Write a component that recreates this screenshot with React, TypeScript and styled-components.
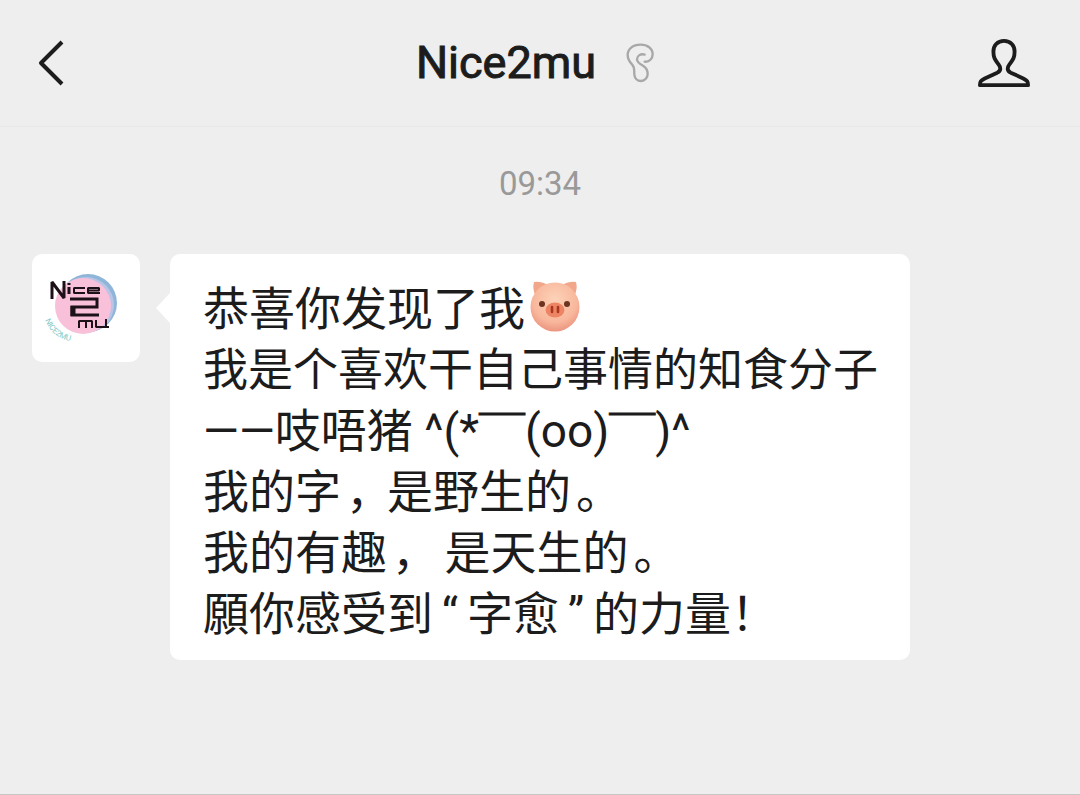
import React from "react";
import styled, { createGlobalStyle } from "styled-components";

const GlobalStyle = createGlobalStyle`
  * { box-sizing: border-box; }
  body {
    margin: 0;
    background: #eeeeee;
    color: #1c1c1c;
    font-family: Roboto, "Noto Sans CJK SC", sans-serif;
  }
`;

const Page = styled.div`
  min-height: 100vh;
  display: flex;
  flex-direction: column;
  background: #eeeeee;
  border-bottom: 1px solid #c6c6c6;
`;

const Header = styled.header`
  display: grid;
  grid-template-columns: 1fr auto 1fr;
  align-items: center;
  height: 127px;
  padding: 0 50px 0 36px;
  border-bottom: 1px solid #e7e7e7;
`;

const IconButton = styled.button<{ $side: "start" | "end" }>`
  display: flex;
  justify-self: ${(p) => p.$side};
  padding: 0;
  border: 0;
  background: none;
  color: #1c1c1c;
  cursor: pointer;
`;

const TitleGroup = styled.div`
  display: flex;
  align-items: center;
  gap: 30px;
  padding-left: 4px;
  color: #a8a8a8;
`;

const Title = styled.h1`
  margin: 0;
  color: #1c1c1c;
  font-size: 45px;
  font-weight: 400;
  line-height: 56px;
  -webkit-text-stroke: 1px currentColor;
`;

const Chat = styled.main`
  display: flex;
  flex-direction: column;
  padding: 37px 32px;
`;

const Time = styled.time`
  align-self: center;
  color: #999999;
  font-size: 33px;
  line-height: 40px;
`;

const Message = styled.article`
  display: flex;
  align-items: flex-start;
  gap: 30px;
  margin-top: 50px;
`;

const Avatar = styled.div`
  display: flex;
  flex: none;
  width: 108px;
  height: 108px;
  border-radius: 10px;
  background: #ffffff;
  overflow: hidden;
`;

const Bubble = styled.div`
  position: relative;
  padding: 25px 32px 15px 33px;
  border-radius: 10px;
  background: #ffffff;

  &::before {
    content: "";
    position: absolute;
    top: 39px;
    left: -14px;
    border-style: solid;
    border-width: 15px 14px 15px 0;
    border-color: transparent #ffffff transparent transparent;
  }
`;

const Line = styled.p<{ $full?: boolean }>`
  display: flex;
  align-items: center;
  margin: 0;
  height: 61px;
  font-size: ${(p) => (p.$full ? 45 : 46)}px;
  line-height: 61px;
  white-space: pre;
`;

const Stop = styled.span`
  width: 46px;
  padding-left: 5px;
  font-feature-settings: "halt";
`;

const Quote = styled.span`
  width: 34px;
  text-align: center;
`;

const Overline = styled.span`
  margin-top: 12px;
  -webkit-text-stroke: 1px currentColor;
`;

const Back = () => (
  <svg width="30" height="48" viewBox="0 0 30 48" fill="none" stroke="currentColor" strokeWidth="4">
    <path d="M26 3 L5 24 L26 45" strokeLinejoin="round" />
  </svg>
);

const Ear = () => (
  <svg width="28" height="40" viewBox="10 10 84 120" fill="none" stroke="currentColor" strokeWidth="7" strokeLinecap="round" strokeLinejoin="round">
    <path d="M66 66 C80 68 90 56 90 44 C90 26 74 15 54 15 C30 15 15 28 15 46 C15 58 20 66 28 74 C37 83 34 91 35 104 C36 116 44 124 55 124 C67 124 75 114 75 102 C75 91 71 85 62 79 C52 73 43 69 43 59 C43 48 54 41 66 45" />
  </svg>
);

const Person = () => (
  <svg width="52" height="52" viewBox="0 0 54 52" fill="none" stroke="currentColor" strokeWidth="4" strokeLinejoin="round">
    <path d="M27 3 C20 3 16 8 16 14 C16 21 18 23 21 27 C24 31 24 34 20 36 L7 42 C3 44 2 45 2 49 H52 C52 45 51 44 47 42 L34 36 C30 34 30 31 33 27 C36 23 38 21 38 14 C38 8 34 3 27 3 Z" />
  </svg>
);

const Logo = () => (
  <svg width="108" height="108" viewBox="0 0 108 108" role="img" aria-label="Nice2mu">
    <circle cx="56" cy="49" r="29" fill="#8fb6d8" />
    <circle cx="54" cy="51" r="28" fill="#b9c4e6" />
    <circle cx="51" cy="52" r="28" fill="#f9c0d9" />
    <g fill="none" stroke="#1d1118" strokeLinejoin="bevel">
      <path strokeWidth="3" d="M20 45 V28 L32 44 V27" />
      <path strokeWidth="3" d="M37 33 V40 M37 29 V31" />
      <path strokeWidth="2" d="M53 34 H42 V39 H53 M56 36.5 H67 V34 H56 V39 H68" />
      <path strokeWidth="3" strokeLinejoin="miter" d="M38 45 H65 V53 H40 V61 H67" />
      <path strokeWidth="5" d="M41 52 V62" />
      <path strokeWidth="2" d="M47 74 V67 H60 V74 M54 67 V74 M64 66 V73 H77 M74 65 V74" />
    </g>
    <path id="logo-arc" d="M13 66 Q22 88 48 88" fill="none" />
    <text fill="#86c9c4" fontFamily="Roboto, sans-serif" fontSize="8">
      <textPath href="#logo-arc">NICE2MU</textPath>
    </text>
  </svg>
);

const PigIcon = styled.svg`
  margin: 0 0 7px 4px;
`;

const Pig = () => (
  <PigIcon width="52" height="52" viewBox="0 0 52 52" role="img" aria-label="猪">
    <defs>
      <radialGradient id="pig-face" cx="50%" cy="35%" r="65%">
        <stop offset="0" stopColor="#fdd3b8" />
        <stop offset="0.7" stopColor="#f8b79c" />
        <stop offset="1" stopColor="#ec9580" />
      </radialGradient>
    </defs>
    <path d="M5 2 Q13 1 20 6 L7 17 Q3 9 5 2 Z M47 2 Q39 1 32 6 L45 17 Q49 9 47 2 Z" fill="#f2a78b" />
    <circle cx="26" cy="27" r="24.5" fill="url(#pig-face)" />
    <circle cx="13" cy="24" r="3" fill="#6d3520" />
    <circle cx="38" cy="24" r="3" fill="#6d3520" />
    <ellipse cx="26" cy="30" rx="9.5" ry="7.5" fill="#ed8565" />
    <path d="M23 27 V32 M29 27 V32" stroke="#a93820" strokeWidth="2.6" strokeLinecap="round" />
  </PigIcon>
);

export default function App() {
  return (
    <Page>
      <GlobalStyle />
      <Header>
        <IconButton $side="start" aria-label="返回">
          <Back />
        </IconButton>
        <TitleGroup>
          <Title>Nice2mu</Title>
          <Ear />
        </TitleGroup>
        <IconButton $side="end" aria-label="个人资料">
          <Person />
        </IconButton>
      </Header>
      <Chat>
        <Time dateTime="09:34">09:34</Time>
        <Message>
          <Avatar>
            <Logo />
          </Avatar>
          <Bubble lang="zh-CN">
            <Line>
              恭喜你发现了我
              <Pig />
            </Line>
            <Line $full>我是个喜欢干自己事情的知食分子</Line>
            <Line>
              <span>——吱唔猪 ^(*</span>
              <Overline>￣</Overline>
              <span>(oo)</span>
              <Overline>￣</Overline>
              <span>)^</span>
            </Line>
            <Line>
              我的字<Stop>，</Stop>是野生的<Stop>。</Stop>
            </Line>
            <Line>
              我的有趣<Stop>，</Stop>
              <span> 是天生的</span>
              <Stop>。</Stop>
            </Line>
            <Line>
              願你感受到<Quote>“</Quote>字愈<Quote>”</Quote>的力量！
            </Line>
          </Bubble>
        </Message>
      </Chat>
    </Page>
  );
}
